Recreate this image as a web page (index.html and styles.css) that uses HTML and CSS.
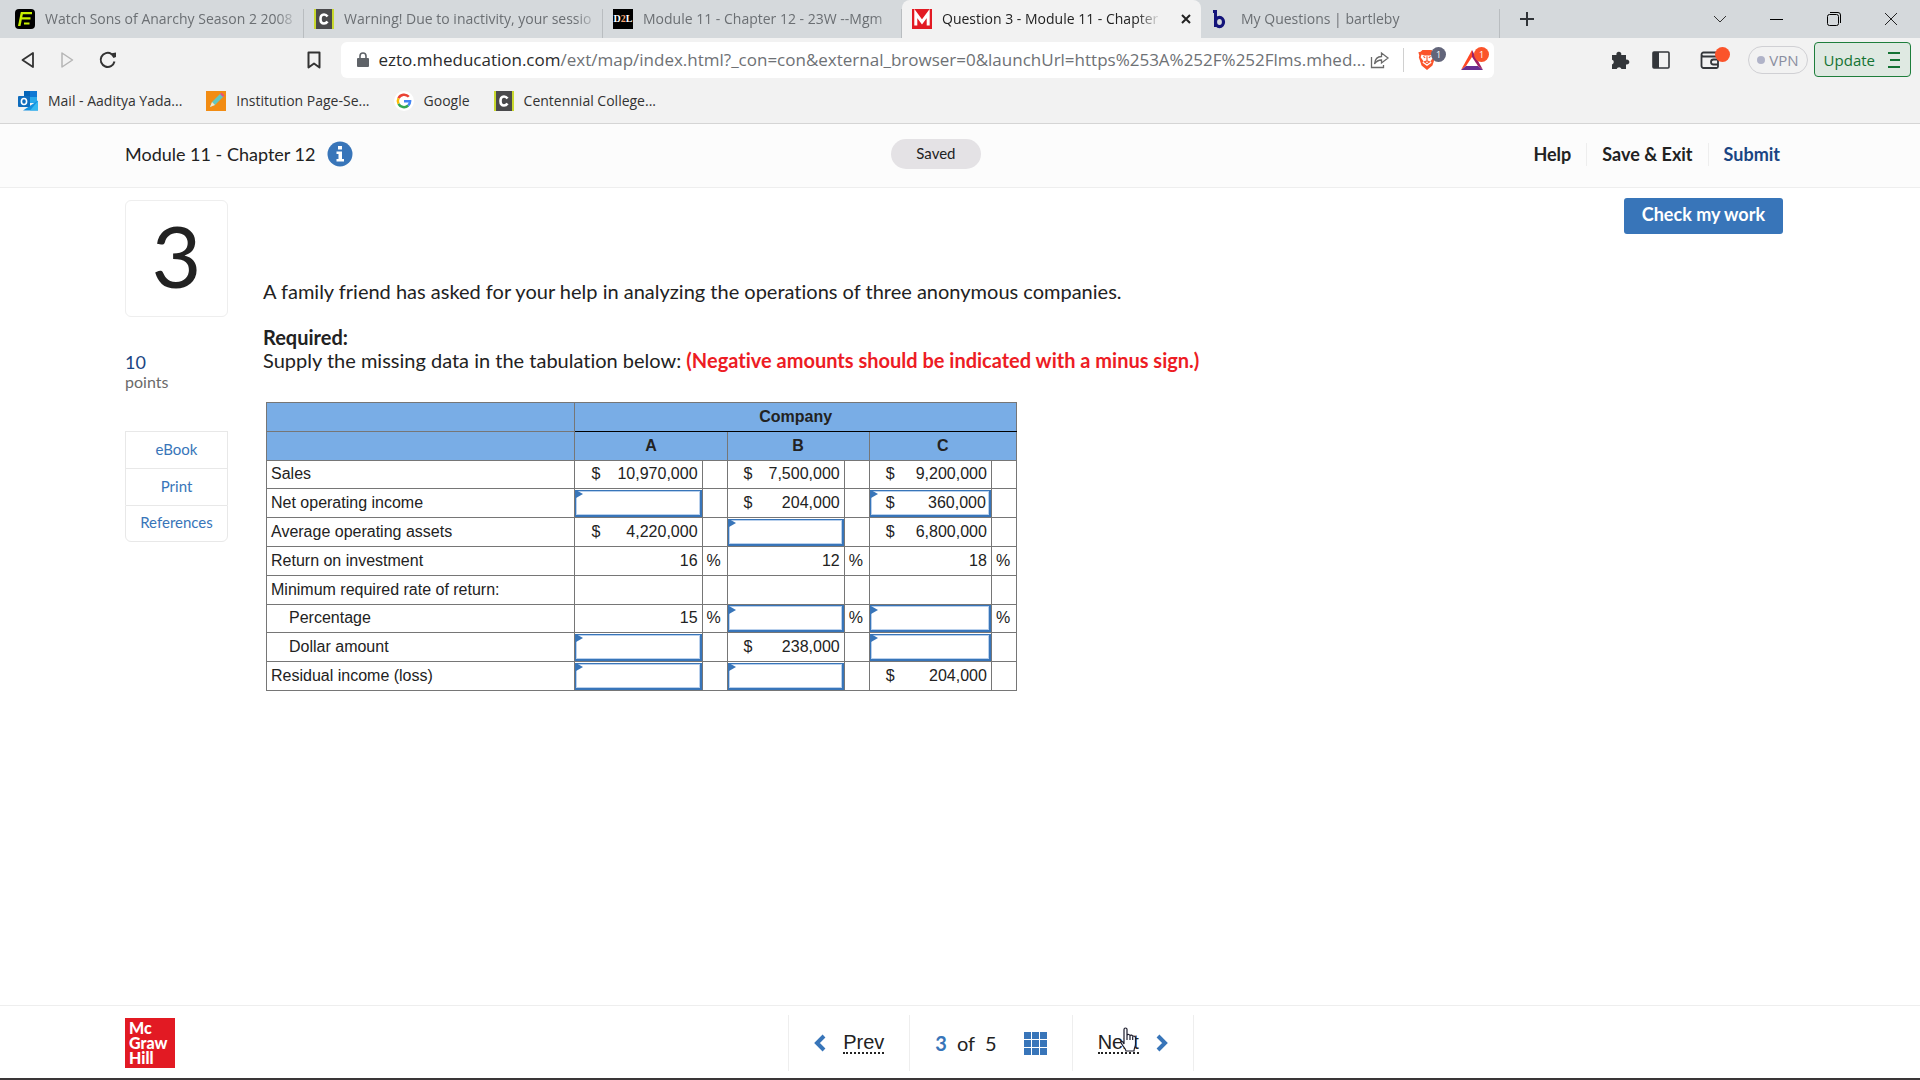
FILE: index.html
```html
<!DOCTYPE html>
<html lang="en">
<head>
    <meta charset="UTF-8">
    <meta name="viewport" content="width=device-width, initial-scale=1.0">
    <title>Question 3 - Module 11 - Chapter 12</title>
    <link rel="stylesheet" href="styles.css">
</head>
<body>

<div class="tabs">
    <div class="tab">
        <svg class="favicon" viewBox="0 0 20 20"><rect width="20" height="20" rx="4" fill="#000"/><path d="M7 4.200h10M6.500 9.300h9M9 14.500h5.500" fill="none" stroke="#c8f000" stroke-width="2.200"/><path d="M3 17 5.800 3.100h2.500L5.500 17z" fill="#c8f000"/></svg>
        <span class="tab-title">Watch Sons of Anarchy Season 2 2008</span>
    </div>
    <div class="tab">
        <svg class="favicon" viewBox="0 0 20 20"><rect width="20" height="20" fill="#c9d92e"/><rect x="2" width="16" height="20" fill="#4a4a4c"/><path d="M13.500 7.500C12.500 6 11.500 5.500 10 5.500 7.500 5.500 6.500 7.500 6.500 10s1 4.500 3.500 4.500c1.500 0 2.500-.5 3.500-2" fill="none" stroke="#fff" stroke-width="2.600"/></svg>
        <span class="tab-title">Warning! Due to inactivity, your sessio</span>
    </div>
    <div class="tab">
        <span class="favicon d2l">D<i>2</i>L</span>
        <span class="tab-title">Module 11 - Chapter 12 - 23W --Mgm</span>
    </div>
    <div class="tab active">
        <svg class="favicon" viewBox="0 0 20 20"><rect width="20" height="20" fill="#e21a23"/><path d="M3.800 16.500V4.500L10 13l6.200-8.500v12" fill="none" stroke="#fff" stroke-width="3"/></svg>
        <span class="tab-title">Question 3 - Module 11 - Chapter</span>
        <button class="tab-close" aria-label="Close tab"><svg width="10" height="10" viewBox="0 0 10 10"><path d="M1 1l8 8M9 1L1 9" stroke="#222" stroke-width="2"/></svg></button>
    </div>
    <div class="tab">
        <svg class="favicon" viewBox="0 0 20 20"><path d="M2 1h4v17H3V4H2z" fill="#14147a"/><ellipse cx="8.500" cy="13" rx="4" ry="4.600" fill="none" stroke="#14147a" stroke-width="3.200"/></svg>
        <span class="tab-title">My Questions | bartleby</span>
    </div>
    <button class="new-tab" aria-label="New tab"><svg width="16" height="16" viewBox="0 0 16 16"><path d="M8 1v14M1 8h14" stroke="#303438" stroke-width="2"/></svg></button>
    <div class="window-buttons">
        <button aria-label="Search tabs"><svg width="14" height="14" viewBox="0 0 14 14"><path d="M1 4l6 6 6-6" fill="none" stroke="#333"/></svg></button>
        <button aria-label="Minimize"><svg width="14" height="14" viewBox="0 0 14 14"><path d="M0 7.500h13" stroke="#000"/></svg></button>
        <button aria-label="Restore"><svg width="14" height="14" viewBox="0 0 14 14"><rect x=".5" y="2.500" width="11" height="11" rx="2" fill="none" stroke="#000"/><path d="M3 .5h8a2.500 2.500 0 0 1 2.500 2.500v8" fill="none" stroke="#000"/></svg></button>
        <button aria-label="Close"><svg width="14" height="14" viewBox="0 0 14 14"><path d="M1 1l12 12M13 1L1 13" stroke="#222"/></svg></button>
    </div>
</div>

<div class="toolbar">
    <div class="nav-buttons">
        <button aria-label="Back"><svg width="16" height="18" viewBox="0 0 16 18"><path d="M13 2v14L2.500 9z" fill="none" stroke="#333" stroke-width="1.800" stroke-linejoin="round"/></svg></button>
        <button aria-label="Forward"><svg width="16" height="18" viewBox="0 0 16 18"><path d="M3 2v14L13.500 9z" fill="none" stroke="#b5b5b5" stroke-width="1.500" stroke-linejoin="round"/></svg></button>
        <button aria-label="Reload"><svg width="20" height="18" viewBox="0 0 20 18"><path d="M13.500 3A7 7 0 1 0 16.500 10.500" fill="none" stroke="#333" stroke-width="2"/><path d="M12 2.500 18 1.500V6l-2.500 1z" fill="#333"/></svg></button>
    </div>
    <button class="bookmark" aria-label="Bookmark this page"><svg width="14" height="18" viewBox="0 0 14 18"><path d="M1.500 1.500h11v15L7 12.500l-5.500 4z" fill="none" stroke="#333" stroke-width="2" stroke-linejoin="round"/></svg></button>
    <div class="address">
        <svg width="12" height="16" viewBox="0 0 12 16"><rect x="0" y="6" width="12" height="9" rx="1" fill="#5f6368"/><path d="M3 7V4a3 3 0 0 1 6 0v3" fill="none" stroke="#5f6368" stroke-width="1.600"/></svg>
        <span class="url"><b>ezto.mheducation.com</b>/ext/map/index.html?_con=con&amp;external_browser=0&amp;launchUrl=https%253A%252F%252Flms.mhed...</span>
        <button aria-label="Share"><svg width="20" height="18" viewBox="0 0 20 18"><path d="M1.500 6v10.500h12V14M4.500 13c.5-5 3-7.500 7-7.500V2L18 7l-6.500 5V9c-3 0-5 1-7 4z" fill="none" stroke="#6a6a6a" stroke-width="1.300"/></svg></button>
        <span class="divider"></span>
        <button class="badged shields" aria-label="Brave Shields"><svg width="20" height="24" viewBox="0 0 22 24"><path d="M6 1h10l2 2 2.500.5-1 3.500.5 2-3 9-6 5-6-5-3-9 .5-2-1-3.500L4 3z" fill="#fb542b"/><path d="M5 6l3 1h6l3-1 1 3-3 4 1 2-5 3.500L6 15l1-2-3-4z" fill="#fff"/><path d="M7 8l2 1.500M15 8l-2 1.500M11 8v5M8 14l3-1 3 1-3 2z" fill="none" stroke="#fb542b" stroke-width="1.200"/></svg><span class="badge grey">1</span></button>
        <button class="badged rewards" aria-label="Brave Rewards"><svg width="24" height="24" viewBox="0 0 24 24"><path d="M12 2 1 22l5-4 6-9z" fill="#ff4724"/><path d="M1 22h22l-5-4H6z" fill="#662d91"/><path d="m12 2 11 20-5-4-6-9z" fill="#9e1f63"/></svg><span class="badge">1</span></button>
    </div>
    <div class="extensions">
        <button aria-label="Extensions"><svg width="20" height="20" viewBox="0 0 20 20"><path d="M2 5h4.500a2.500 2.500 0 1 1 4.700 0H16v4.700a2.500 2.500 0 1 1 0 4.700V19h-4.500a2.500 2.500 0 0 0-4.800 0H2v-4.500a2.500 2.500 0 0 0 0-4.800z" fill="#33363a"/></svg></button>
        <button aria-label="Sidebar"><svg width="18" height="18" viewBox="0 0 18 18"><rect x="1" y="1" width="16" height="16" rx="1" fill="none" stroke="#33363a" stroke-width="1.600"/><path d="M1 1h6v16H1z" fill="#33363a"/></svg></button>
        <button class="badged wallet" aria-label="Wallet"><svg width="20" height="24" viewBox="0 0 20 24"><path d="M17 8V6a1.500 1.500 0 0 0-1.500-1.500h-12a2 2 0 0 0 0 4h13A1.500 1.500 0 0 1 18 10v8.500a1.500 1.500 0 0 1-1.500 1.500h-13a2 2 0 0 1-2-2V7" fill="none" stroke="#33363a" stroke-width="1.800"/><path d="M18 11.500h-4.500a2.500 2.500 0 0 0 0 5H18" fill="none" stroke="#33363a" stroke-width="1.800"/></svg><span class="badge dot"></span></button>
        <button class="vpn">VPN</button>
        <button class="update">Update <svg width="12" height="18" viewBox="0 0 12 18"><path d="M0 2h12M2 9h10M0 16h12" stroke="#137333" stroke-width="1.800"/></svg></button>
    </div>
</div>

<div class="bookmarks">
    <a href="#"><svg class="favicon" viewBox="0 0 20 20"><rect x="6" width="13" height="12" fill="#28a8ea"/><path d="M6 0h6v6H6z" fill="#0364b8"/><path d="M12 0h7v6h-7z" fill="#0f78d4"/><path d="M5 19.500l15-10v10z" fill="#1490df"/><path d="M20 10v9.500h-8z" fill="#35b8f1"/><rect y="5" width="12" height="11" rx="1" fill="#0f6cbd"/><ellipse cx="6" cy="10.500" rx="2.600" ry="3" fill="none" stroke="#fff" stroke-width="1.600"/></svg>Mail - Aaditya Yada...</a>
    <a href="#"><svg class="favicon" viewBox="0 0 20 20"><rect width="20" height="20" fill="#f28c13"/><path d="M4 16l2-5 9-9 3 3-9 9z" fill="#63c7c0"/><path d="M4 16l2-5 3 3z" fill="#fbe3c0"/><path d="M14 3l1.500-1.500 3 3L17 6z" fill="#e8507a"/></svg>Institution Page-Se...</a>
    <a href="#"><svg class="favicon" viewBox="0 0 20 20"><circle cx="10" cy="10" r="10" fill="#fff"/><path d="M14.800 5.800A6.200 6.200 0 0 0 4.500 7.200" fill="none" stroke="#ea4335" stroke-width="2.500"/><path d="M4.500 7.200a6.200 6.200 0 0 0 0 5.600" fill="none" stroke="#fbbc05" stroke-width="2.500"/><path d="M4.500 12.800a6.200 6.200 0 0 0 9.700 1.700" fill="none" stroke="#34a853" stroke-width="2.500"/><path d="M14.200 14.500c1.300-1 1.900-2.500 1.900-4.200H10" fill="none" stroke="#4285f4" stroke-width="2.500"/></svg>Google</a>
    <a href="#"><svg class="favicon" viewBox="0 0 20 20"><rect width="20" height="20" fill="#c9d92e"/><rect x="2" width="16" height="20" fill="#4a4a4c"/><path d="M13.500 7.500C12.500 6 11.500 5.500 10 5.500 7.500 5.500 6.500 7.500 6.500 10s1 4.500 3.500 4.500c1.500 0 2.500-.5 3.500-2" fill="none" stroke="#fff" stroke-width="2.600"/></svg>Centennial College...</a>
</div>

<header class="header">
    <div class="header-title">
        <span>Module 11 - Chapter 12</span>
        <svg width="26" height="26" viewBox="0 0 26 26"><circle cx="13" cy="13" r="12.500" fill="#3875b9"/><path d="M11 5h4v3.500h-4zM9.500 10.500H15V18h2v2.500H9.500V18h2v-5h-2z" fill="#fff"/></svg>
    </div>
    <span class="saved">Saved</span>
    <nav class="header-links">
        <a href="#">Help</a>
        <a href="#">Save &amp; Exit</a>
        <a href="#" class="submit">Submit</a>
    </nav>
</header>

<main class="content">
    <aside class="sidebar">
        <div class="number">3</div>
        <div class="points"><b>10</b>points</div>
        <div class="links">
            <button>eBook</button>
            <button>Print</button>
            <button>References</button>
        </div>
    </aside>

    <section class="question">
        <button class="check">Check my work</button>
        <p>A family friend has asked for your help in analyzing the operations of three anonymous companies.</p>
        <p><strong>Required:</strong><br>Supply the missing data in the tabulation below: <strong class="note">(Negative amounts should be indicated with a minus sign.)</strong></p>

        <table>
            <colgroup>
                <col class="col-label">
                <col class="col-a"><col class="col-unit">
                <col class="col-b"><col class="col-unit">
                <col class="col-c"><col class="col-unit">
            </colgroup>
            <tr>
                <th></th>
                <th colspan="6" class="company">Company</th>
            </tr>
            <tr>
                <th></th>
                <th colspan="2">A</th>
                <th colspan="2">B</th>
                <th colspan="2">C</th>
            </tr>
            <tr>
                <td>Sales</td>
                <td><div class="amount"><span>$</span>10,970,000</div></td><td></td>
                <td><div class="amount"><span>$</span>7,500,000</div></td><td></td>
                <td><div class="amount"><span>$</span>9,200,000</div></td><td></td>
            </tr>
            <tr>
                <td>Net operating income</td>
                <td class="entry"><div class="answer"><input type="text" aria-label="Net operating income, company A"></div></td><td></td>
                <td><div class="amount"><span>$</span>204,000</div></td><td></td>
                <td class="entry"><div class="answer"><span>$</span><input type="text" aria-label="Net operating income, company C" value="360,000"></div></td><td></td>
            </tr>
            <tr>
                <td>Average operating assets</td>
                <td><div class="amount"><span>$</span>4,220,000</div></td><td></td>
                <td class="entry"><div class="answer"><input type="text" aria-label="Average operating assets, company B"></div></td><td></td>
                <td><div class="amount"><span>$</span>6,800,000</div></td><td></td>
            </tr>
            <tr>
                <td>Return on investment</td>
                <td><div class="amount"><span></span>16</div></td><td>%</td>
                <td><div class="amount"><span></span>12</div></td><td>%</td>
                <td><div class="amount"><span></span>18</div></td><td>%</td>
            </tr>
            <tr>
                <td>Minimum required rate of return:</td>
                <td></td><td></td>
                <td></td><td></td>
                <td></td><td></td>
            </tr>
            <tr>
                <td class="indent">Percentage</td>
                <td><div class="amount"><span></span>15</div></td><td>%</td>
                <td class="entry"><div class="answer"><input type="text" aria-label="Percentage, company B"></div></td><td>%</td>
                <td class="entry"><div class="answer"><input type="text" aria-label="Percentage, company C"></div></td><td>%</td>
            </tr>
            <tr>
                <td class="indent">Dollar amount</td>
                <td class="entry"><div class="answer"><input type="text" aria-label="Dollar amount, company A"></div></td><td></td>
                <td><div class="amount"><span>$</span>238,000</div></td><td></td>
                <td class="entry"><div class="answer"><input type="text" aria-label="Dollar amount, company C"></div></td><td></td>
            </tr>
            <tr>
                <td>Residual income (loss)</td>
                <td class="entry"><div class="answer"><input type="text" aria-label="Residual income, company A"></div></td><td></td>
                <td class="entry"><div class="answer"><input type="text" aria-label="Residual income, company B"></div></td><td></td>
                <td><div class="amount"><span>$</span>204,000</div></td><td></td>
            </tr>
        </table>
    </section>
</main>

<footer class="footer">
    <div class="logo"><span>Mc</span><span>Graw</span><span>Hill</span></div>
    <nav class="pager">
        <a href="#"><svg width="12" height="18" viewBox="0 0 12 18"><path d="M10 2L3 9l7 7" fill="none" stroke="#3875b9" stroke-width="4"/></svg><span>Prev</span></a>
        <div class="pages"><b>3</b> of <span>5</span>
            <svg width="23" height="23" viewBox="0 0 23 23"><path d="M0 0h7v7H0zM8 0h7v7H8zM16 0h7v7h-7zM0 8h7v7H0zM8 8h7v7H8zM16 8h7v7h-7zM0 16h7v7H0zM8 16h7v7H8zM16 16h7v7h-7z" fill="#3875b9"/></svg>
        </div>
        <a href="#" class="next"><span>Next</span><svg width="12" height="18" viewBox="0 0 12 18"><path d="M2 2l7 7-7 7" fill="none" stroke="#3875b9" stroke-width="4"/></svg>
            <svg class="cursor" width="18" height="26" viewBox="0 0 18 26"><path d="M4 17V2.500a1.500 1.500 0 0 1 3 0V8c1-1 2.500-.5 3 .5 1-.8 2.200-.3 2.700.8 1.200-.6 2.800.1 2.800 1.700v6c0 3-1.500 4-1.500 7H6c0-2-3-4-5-8.500-.4-1.300 1.500-2 3 1.500zM7 8v5M10 9v4M12.700 10v3" fill="#fff" stroke="#1c1c2c" stroke-width="1.200"/></svg></a>
    </nav>
</footer>

</body>
</html>
```
FILE: styles.css
```css
* {
    box-sizing: border-box;
}
body {
    margin: 0;
    min-height: 100vh;
    display: flex;
    flex-direction: column;
    background-color: white;
    color: #222;
    font-family: Lato, "Liberation Sans", sans-serif;
    font-size: 20px;
    line-height: 23px;
    font-variant-ligatures: none;
}
button {
    font: inherit;
    color: inherit;
    background: none;
    border: none;
    padding: 0;
    cursor: pointer;
}
a {
    color: inherit;
    text-decoration: none;
}
svg {
    display: block;
    flex-shrink: 0;
}

/* browser window */
.tabs, .toolbar, .bookmarks {
    display: flex;
    align-items: center;
    font-family: "Open Sans", "Noto Sans", sans-serif;
    font-size: 14px;
    line-height: 20px;
}
.tabs {
    height: 38px;
    padding-left: 5px;
    background-color: #d5d9dc;
}
.tab {
    display: flex;
    align-items: center;
    gap: 10px;
    width: 299px;
    height: 38px;
    padding: 0 4px 0 10px;
    color: #6b6f73;
    background: linear-gradient(#b9bdc0, #b9bdc0) right bottom / 1px 29px no-repeat;
}
.tab.active {
    background: #f2f2f2;
    border-radius: 8px 8px 0 0;
    color: #222;
}
.tab-title {
    flex: 1;
    overflow: hidden;
    white-space: nowrap;
    -webkit-mask-image: linear-gradient(to left, transparent, black 24px);
    mask-image: linear-gradient(to left, transparent, black 24px);
}
.tab-close {
    padding: 0 6px 0 10px;
}
.favicon {
    width: 20px;
    height: 20px;
    flex-shrink: 0;
}
.d2l {
    background-color: #000;
    color: white;
    font: bold 10px/20px "Liberation Serif", serif;
    text-align: center;
}
.d2l i {
    color: #f5a673;
    font-style: normal;
}
.new-tab {
    padding: 0 19px;
}
.window-buttons {
    display: flex;
    margin-left: auto;
}
.window-buttons button {
    width: 57px;
    padding: 0 21px;
}
.toolbar {
    height: 43px;
    background-color: #f2f2f2;
    padding: 0 9px 0 20px;
}
.nav-buttons {
    display: flex;
    align-items: center;
    gap: 23px;
    flex: 1;
}
.bookmark {
    margin-right: 20px;
}
.address {
    display: flex;
    align-items: center;
    width: 61%;
    height: 36px;
    padding: 0 5px 0 16px;
    background-color: white;
    border-radius: 6px;
    color: #6e7175;
}
.url {
    flex: 1;
    margin-left: 10px;
    font-size: 17px;
    white-space: nowrap;
}
.url b {
    font-weight: normal;
    color: #2b2b2b;
}
.divider {
    width: 1px;
    height: 24px;
    margin: 0 13px;
    background-color: #d0d0d0;
}
.badged {
    position: relative;
}
.shields {
    margin-right: 14px;
    padding-right: 9px;
}
.rewards {
    padding-right: 5px;
}
.badge {
    position: absolute;
    top: -1px;
    right: 0;
    width: 15px;
    height: 15px;
    border-radius: 50%;
    background-color: #fb542b;
    color: white;
    font-size: 9px;
    line-height: 15px;
}
.badge.grey {
    background-color: #62657a;
}
.extensions {
    display: flex;
    align-items: center;
    justify-content: flex-end;
    width: 417px;
    font-size: 15px;
}
.extensions > button {
    margin-right: 22px;
}
.extensions .wallet {
    margin: 0 18px 0 8px;
    padding-right: 10px;
}
.extensions .vpn {
    display: flex;
    align-items: center;
    gap: 4px;
    height: 28px;
    margin-right: 6px;
    padding: 0 8px;
    border: 1px solid #d0d0d4;
    border-radius: 14px;
    color: #8a8ea0;
}
.vpn::before {
    content: "";
    width: 8px;
    height: 8px;
    border-radius: 50%;
    background-color: #b0b3c8;
}
.extensions .update {
    display: flex;
    align-items: center;
    gap: 13px;
    height: 35px;
    margin-right: 0;
    padding: 0 10px 0 9px;
    border: 1px solid #1e7e3c;
    border-radius: 4px;
    background-color: #dfe9e2;
    color: #137333;
}
.bookmarks {
    height: 43px;
    gap: 24px;
    padding: 0 18px 2px;
    background-color: #f2f2f2;
    border-bottom: 1px solid #d5d5d5;
    color: #333;
}
.bookmarks a {
    display: flex;
    align-items: center;
    gap: 10px;
}

/* assignment */
.header {
    display: flex;
    justify-content: space-between;
    align-items: center;
    height: 64px;
    padding: 0 137px 3px 125px;
    background-color: #fcfcfc;
    border-bottom: 1px solid #eee;
    font-size: 18px;
}
.header-title {
    display: flex;
    align-items: center;
    gap: 12px;
}
.saved {
    padding: 3px 25px 4px;
    border-radius: 15px;
    background-color: #e4e2e5;
    font-size: 15px;
}
.header-links {
    display: flex;
    font-weight: bold;
}
.header-links a {
    padding: 0 15px;
    border-left: 1px solid #eee;
}
.header-links a:first-child {
    border-left: none;
}
.header-links .submit {
    padding-right: 3px;
    color: #1a4583;
}
.content {
    flex: 1;
    display: flex;
    gap: 35px;
    padding: 12px 137px 0 125px;
}
.sidebar {
    width: 103px;
}
.number {
    height: 117px;
    border: 1px solid #eee;
    border-radius: 6px;
    font-size: 86px;
    line-height: 108px;
    text-align: center;
}
.points {
    margin: 35px 0 39px;
    font-size: 16px;
    line-height: 20px;
    color: #6a6a6a;
}
.points b {
    display: block;
    font-size: 18px;
    font-weight: normal;
    color: #1a4583;
}
.links button {
    display: block;
    width: 100%;
    height: 37px;
    padding-bottom: 2px;
    border: 1px solid #e8e8e8;
    border-bottom: none;
    font-size: 15px;
    color: #3875b9;
}
.links button:last-child {
    border-bottom: 1px solid #e8e8e8;
    border-radius: 0 0 6px 6px;
}
.question {
    flex: 1;
    display: flex;
    flex-direction: column;
}
.question p {
    margin: 0 0 23px;
}
.check {
    align-self: flex-end;
    height: 36px;
    margin: -2px 0 46px;
    padding: 0 18px 4px;
    border-radius: 3px;
    background-color: #3875b9;
    color: white;
    font-size: 18px;
    font-weight: bold;
}
.note {
    color: #ed1c24;
}
table {
    width: 751px;
    height: 289px;
    margin: 7px 0 0 3px;
    border-collapse: collapse;
    table-layout: fixed;
    font: 16px/20px "Liberation Sans", Arial, sans-serif;
}
.col-label {
    width: 308px;
}
.col-a {
    width: 127px;
}
.col-b {
    width: 117px;
}
.col-c {
    width: 122px;
}
.col-unit {
    width: 25px;
}
th, td {
    height: 28px;
    border: 1px solid #767676;
    padding: 0 4px;
    text-align: left;
    white-space: nowrap;
}
th {
    background-color: #79ade6;
    text-align: center;
}
th.company {
    border-bottom-color: #000;
}
td.indent {
    padding-left: 22px;
}
td.entry {
    position: relative;
    padding: 0;
}
td.entry::before {
    content: "";
    position: absolute;
    top: 1px;
    left: 1px;
    border-left: 7px solid #3875b9;
    border-top: 4px solid transparent;
    border-bottom: 4px solid transparent;
}
.amount, .answer {
    display: flex;
    justify-content: space-between;
    padding-left: 12px;
}
.answer {
    height: 27px;
    align-items: center;
    padding: 0 3px 0 15px;
    border: 2px solid #3875b9;
    border-width: 1px 2px 2px 1px;
    box-shadow: inset 0 0 0 1px #b9d0ec;
}
.answer input {
    width: 100%;
    min-width: 0;
    padding: 0;
    border: none;
    background: none;
    outline: none;
    font: inherit;
    color: inherit;
    text-align: right;
}

.footer {
    display: flex;
    align-items: center;
    height: 75px;
    padding: 2px 113px 0 125px;
    border-top: 1px solid #eee;
    border-bottom: 2px solid #3a3638;
}
.logo {
    display: flex;
    flex-direction: column;
    width: 50px;
    height: 50px;
    padding: 2px 4px;
    background-color: #e21a23;
    color: white;
    font: 900 16px/15px Lato, sans-serif;
}
.pager {
    display: flex;
    margin: 0 auto;
}
.pager > * {
    display: flex;
    align-items: center;
    height: 56px;
    padding: 0 25px;
    border-left: 1px solid #eee;
}
.pager > a {
    gap: 17px;
    position: relative;
}
.pager > a:last-child {
    border-right: 1px solid #eee;
}
.pager a > span {
    border-bottom: 2px dotted #222;
    font-family: "Liberation Sans", Arial, sans-serif;
    line-height: 20px;
}
.pages {
    gap: 10px;
}
.pages b {
    color: #3875b9;
}
.pages svg {
    margin-left: 17px;
}
.cursor {
    position: absolute;
    top: 12px;
    left: 47px;
}
```
